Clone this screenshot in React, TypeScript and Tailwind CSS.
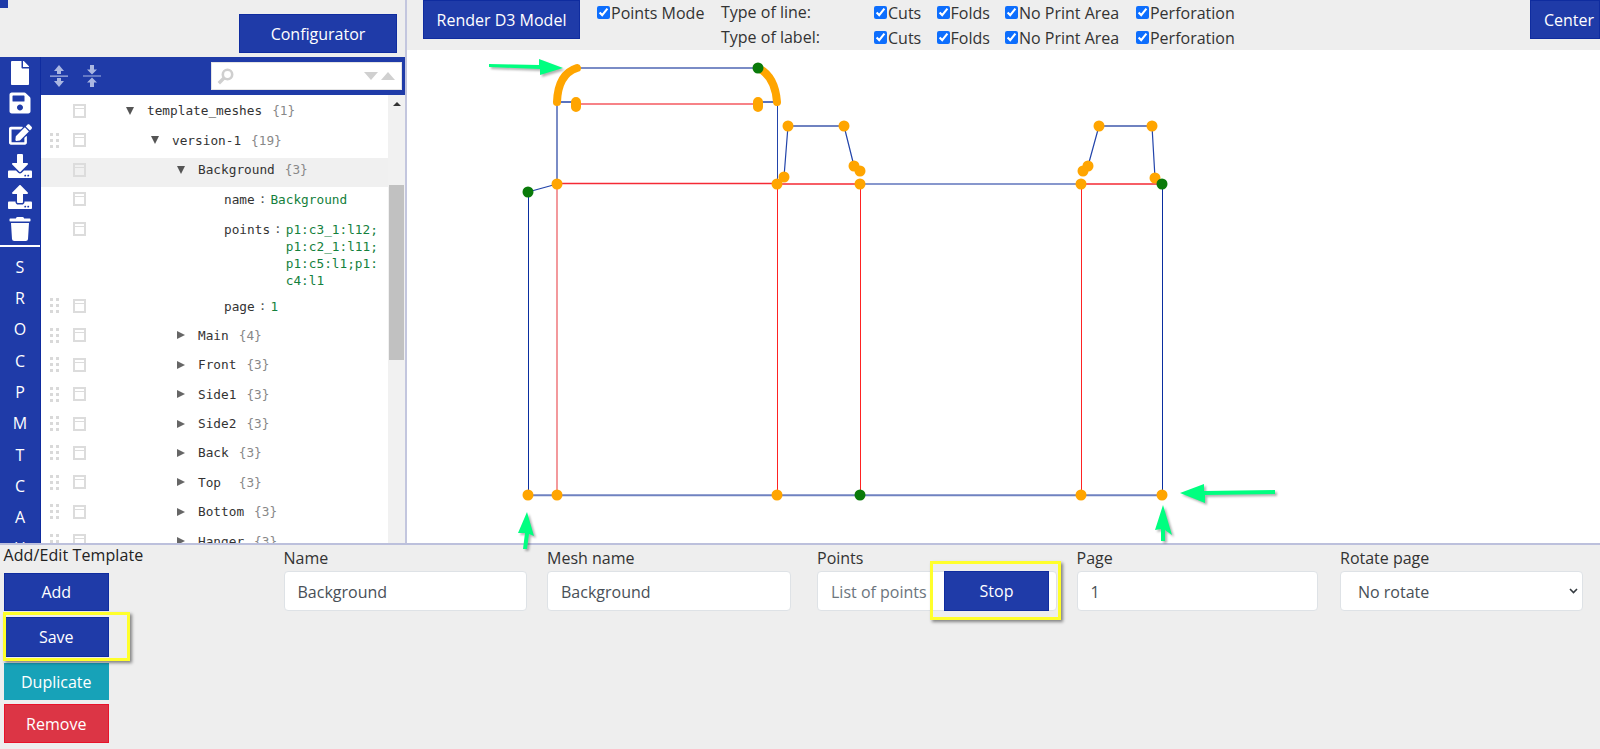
import React from "react"
import { FaDownload, FaEdit, FaFile, FaSave, FaTrash, FaUpload } from "react-icons/fa"

const BLUE_BTN =
  "bg-[#1f3ba8] border border-[#0f2c9f] text-white text-[16px] flex items-center justify-center"

type Row = {
  level: number
  name: string
  count?: string
  value?: string
  open?: boolean
  grip?: boolean
  active?: boolean
}

const rowsTop: Row[] = [
  { level: 0, name: "template_meshes", count: "{1}", open: true },
  { level: 1, name: "version-1", count: "{19}", open: true, grip: true },
  { level: 2, name: "Background", count: "{3}", open: true, active: true },
]

const rowsBottom: Row[] = [
  { level: 2, name: "Main", count: "{4}", grip: true },
  { level: 2, name: "Front", count: "{3}", grip: true },
  { level: 2, name: "Side1", count: "{3}", grip: true },
  { level: 2, name: "Side2", count: "{3}", grip: true },
  { level: 2, name: "Back", count: "{3}", grip: true },
  { level: 2, name: "Top ", count: "{3}", grip: true },
  { level: 2, name: "Bottom", count: "{3}", grip: true },
  { level: 2, name: "Hanger", count: "{3}", grip: true },
]

function Grip() {
  return (
    <div className="grid w-[9px] grid-cols-2 gap-x-[3px] gap-y-[3px]">
      {[0, 1, 2, 3, 4, 5].map((i) => (
        <span key={i} className="h-[3px] w-[3px] bg-[#d9d9d9]" />
      ))}
    </div>
  )
}

function Gutter({ grip }: { grip?: boolean }) {
  return (
    <div className="flex h-[24px] w-[51px] shrink-0 items-center">
      <div className="ml-[9px] w-[23px]">{grip && <Grip />}</div>
      <div className="h-[14px] w-[13px] border-2 border-[#dcdcdc] pt-[2px]">
        <div className="h-[1px] w-full bg-[#dcdcdc]" />
      </div>
    </div>
  )
}

function TreeRow({ row }: { row: Row }) {
  const indent = ["ml-[34px]", "ml-[59px]", "ml-[85px]"][row.level]
  return (
    <div className={`flex h-[29.45px] items-start ${row.active ? "bg-[#f0f0f0]" : ""}`}>
      <Gutter grip={row.grip} />
      <div className={`flex h-[24px] items-center ${indent}`}>
        {row.open ? (
          <span className="h-0 w-0 border-x-[4.5px] border-t-[8px] border-x-transparent border-t-[#555]" />
        ) : (
          <span className="h-0 w-0 border-y-[4.5px] border-l-[8px] border-y-transparent border-l-[#666]" />
        )}
        <span className="ml-[13px] whitespace-pre text-[#333]">{row.name}</span>
        <span className="ml-[10px] text-[#888]">{row.count}</span>
      </div>
    </div>
  )
}

function PropRow({ name, value, multi }: { name: string; value: string[]; multi?: boolean }) {
  return (
    <div className={`flex items-start ${multi ? "h-[77px]" : "h-[29.45px]"}`}>
      <Gutter grip={name === "page"} />
      <div className="ml-[132px] flex items-start pt-[4px] leading-[17px]">
        <span className="text-[#333]">{name}</span>
        <span className="mx-[4px] -mt-[1px] text-[#555]">:</span>
        <div className="text-[#14803c]">
          {value.map((v) => (
            <div key={v}>{v}</div>
          ))}
        </div>
      </div>
    </div>
  )
}

function Tree() {
  return (
    <div className="h-full flex-1 overflow-hidden bg-white pt-[4px] font-['DejaVu_Sans_Mono',monospace] text-[12.75px]">
      {rowsTop.map((r) => (
        <TreeRow key={r.name} row={r} />
      ))}
      <PropRow name="name" value={["Background"]} />
      <PropRow name="points" multi value={["p1:c3_1:l12;", "p1:c2_1:l11;", "p1:c5:l1;p1:", "c4:l1"]} />
      <PropRow name="page" value={["1"]} />
      {rowsBottom.map((r) => (
        <TreeRow key={r.name} row={r} />
      ))}
    </div>
  )
}

function Sidebar() {
  const icons = [
    <FaFile key="file" size={24} />,
    <FaSave key="save" size={24} />,
    <FaEdit key="edit" size={23} />,
    <FaDownload key="dl" size={24} />,
    <FaUpload key="ul" size={24} />,
    <FaTrash key="trash" size={24} />,
  ]
  return (
    <div className="h-full w-[41px] shrink-0 overflow-hidden border-r border-[#0f2c9f] bg-[#1f3ba8] text-white">
      {icons.map((icon, i) => (
        <div key={i} className={`flex h-[31.2px] items-center justify-center ${i === 1 ? "-mt-[1px] mb-[1px]" : ""}`}>
          {icon}
        </div>
      ))}
      <div className="mt-[1px] h-[2px] w-full bg-white" />
      <div className="pt-[4px]">
        {["S", "R", "O", "C", "P", "M", "T", "C", "A", "H"].map((l, i) => (
          <div key={i} className="flex h-[31.3px] items-center justify-center text-[16px]">
            {l}
          </div>
        ))}
      </div>
    </div>
  )
}

function TreeHeader() {
  return (
    <div className="flex h-[38px] shrink-0 items-center bg-[#1f3ba8]">
      <svg width="18" height="22" viewBox="0 0 18 22" className="ml-[9px]">
        <path d="M9 0l5 6h-3v3H7V6H4zM9 22l5-6h-3v-3H7v3H4zM0 10.5h18v1.2H0z" fill="#aab7e2" />
      </svg>
      <svg width="18" height="22" viewBox="0 0 18 22" className="ml-[15px]">
        <path d="M9 9.5l5-5h-3V0H7v4.5H4zM9 12.5l5 5h-3V22H7v-4.5H4zM0 10.4h18v1.2H0z" fill="#aab7e2" />
      </svg>
      <div className="ml-[110px] flex h-[28px] w-[191px] items-center border border-[#e4e4e4] bg-white pl-[5px] pr-[6px]">
        <svg width="17" height="17" viewBox="0 0 17 17">
          <circle cx="10.5" cy="6.5" r="4.7" fill="none" stroke="#cfcfcf" strokeWidth="2.6" />
          <path d="M7 10L1.8 15.2" stroke="#cfcfcf" strokeWidth="3.4" />
        </svg>
        <span className="ml-auto h-0 w-0 border-x-[7px] border-t-[8px] border-x-transparent border-t-[#d0d0d0]" />
        <span className="ml-[3px] h-0 w-0 border-x-[7px] border-b-[8px] border-x-transparent border-b-[#d0d0d0]" />
      </div>
    </div>
  )
}

function Scrollbar() {
  return (
    <div className="h-full w-[17px] shrink-0 bg-[#f1f1f1]">
      <div className="flex h-[17px] items-center justify-center">
        <span className="h-0 w-0 border-x-[4px] border-b-[4px] border-x-transparent border-b-[#333]" />
      </div>
      <div className="mx-auto mt-[73px] h-[175px] w-[15px] bg-[#c1c1c1]" />
    </div>
  )
}

function Check({ label }: { label: string }) {
  return (
    <label className="flex h-[25px] items-center whitespace-nowrap">
      <input type="checkbox" defaultChecked className="m-0 mr-[1px] h-[13px] w-[13px] accent-[#0d6efd]" />
      {label}
    </label>
  )
}

function CheckGroup({ title }: { title: string }) {
  return (
    <div className="grid grid-cols-[153px_62.6px_68.4px_131px_auto] items-center">
      <span className="h-[25px] leading-[25px]">{title}</span>
      <Check label="Cuts" />
      <Check label="Folds" />
      <Check label="No Print Area" />
      <Check label="Perforation" />
    </div>
  )
}

function Toolbar() {
  return (
    <div className="flex h-[50px] shrink-0 items-start bg-[#eeeeee] text-[#333]">
      <button className={`${BLUE_BTN} ml-[16px] h-[39px] w-[157px]`}>Render D3 Model</button>
      <div className="ml-[17px] w-[124px]">
        <Check label="Points Mode" />
      </div>
      <div>
        <CheckGroup title="Type of line:" />
        <CheckGroup title="Type of label:" />
      </div>
      <button className={`${BLUE_BTN} ml-auto h-[39px] w-[70px] pl-[8px]`}>Center</button>
    </div>
  )
}

const ORANGE = "#ffa500"
const GREEN = "#0a7a0a"

const orangeDots = [
  [557, 184], [777, 184], [784, 177], [788, 126], [844, 126], [854, 166], [860, 171], [860, 184],
  [1081, 184], [1099, 126], [1152, 126], [1088, 166], [1083, 171], [1155, 178],
  [528, 495], [557, 495], [777, 495], [1081, 495], [1162, 495],
]
const greenDots = [
  [758, 68], [528, 192], [1162, 184], [860, 495],
]

function Diagram() {
  return (
    <svg viewBox="407 50 1193 493" className="block h-[493px] w-[1193px]">
      <g fill="none">
        <path d="M577 68H758" stroke="#7a8cc6" strokeWidth="2" />
        <path d="M557 102H576M758 102H777" stroke="#2244aa" strokeWidth="1.5" />
        <path d="M576 104H758" stroke="#f4595f" strokeWidth="1.5" />
        <path d="M557 102V184" stroke="#7a8cc6" strokeWidth="2" />
        <path d="M777.5 102V184" stroke="#2244aa" strokeWidth="1" />
        <path d="M788 126H844M1099 126H1152" stroke="#6f82c0" strokeWidth="2" />
        <path d="M788 126L784 177M844 126L854 166M1099 126L1088 166M1152 126L1155 178" stroke="#2244aa" strokeWidth="1.2" />
        <path d="M557 183.5H778M778 184H860M1081 184H1162" stroke="#f52a35" strokeWidth="1.3" />
        <path d="M860 184H1081" stroke="#5f74bc" strokeWidth="1.6" />
        <path d="M528 192L557 184" stroke="#2244aa" strokeWidth="1.2" />
        <path d="M528.5 192V495M1162.5 184V495" stroke="#0a2ea0" strokeWidth="1" />
        <path d="M557 184V495" stroke="#f08084" strokeWidth="1.6" />
        <path d="M777.5 184V495M860.5 184V495M1081.5 184V495" stroke="#f22" strokeWidth="1" />
        <path d="M528 495.3H1162" stroke="#6f82c0" strokeWidth="2" />
        <path d="M577 68Q558 74 557 102M758 68Q775 76 777 102" stroke={ORANGE} strokeWidth="8" strokeLinecap="round" />
        <path d="M576 102V107M758 102V107" stroke={ORANGE} strokeWidth="10" strokeLinecap="round" />
      </g>
      {orangeDots.map(([x, y], i) => (
        <circle key={i} cx={x} cy={y} r="5.5" fill={ORANGE} />
      ))}
      {greenDots.map(([x, y], i) => (
        <circle key={i} cx={x} cy={y} r="5.5" fill={GREEN} />
      ))}
    </svg>
  )
}

function Arrows() {
  return (
    <svg
      viewBox="0 0 1600 749"
      className="pointer-events-none absolute left-0 top-0 h-[749px] w-[1600px] drop-shadow-[2px_2px_1px_rgba(0,0,0,0.3)]"
    >
      <g fill="#00ff80">
        <path d="M489 64L539 65V59L563 68L540 75V69L489 67Z" />
        <path d="M1275 490L1204 491V484L1180 493L1205 503V495L1275 494Z" />
        <path d="M1163 505L1155 530L1161 529V541H1165V530L1172 535Z" />
        <path d="M527 512L518 533L525 533L523 549L527 549L529 534L534 536Z" />
      </g>
    </svg>
  )
}

function Field({ label, className, children }: { label: string; className: string; children: React.ReactNode }) {
  return (
    <div className={className}>
      <div className="h-[26px] text-[16px] leading-[26px] text-[#333]">{label}</div>
      {children}
    </div>
  )
}

const INPUT =
  "block h-[40px] w-full rounded-[4px] border border-[#dee2e6] bg-white pl-[13px] pt-[2px] text-[16px] text-[#495057] outline-none placeholder:text-[#6c757d]"

function BottomPanel() {
  return (
    <div className="relative flex flex-1 border-t-2 border-[#bcc0dc] bg-[#eeeeee] text-[16px]">
      <div className="w-[283.5px] shrink-0 pl-[3.5px]">
        <div className="h-[28px] whitespace-nowrap leading-[20px] font-medium tracking-[0.1px] text-[#222]">Add/Edit Template</div>
        <button className={`${BLUE_BTN} h-[38px] w-[105.5px]`}>Add</button>
        <button className={`${BLUE_BTN} mt-[6px] h-[40px] w-[105.5px]`}>Save</button>
        <button className="mt-[6px] flex h-[37px] w-[105.5px] items-center justify-center bg-[#17a2b8] text-white">
          Duplicate
        </button>
        <button className="mt-[4px] flex h-[39px] w-[105.5px] items-center justify-center border border-[#e8132a] bg-[#dc3545] text-white">
          Remove
        </button>
        <div className="absolute left-[3px] top-[67px] h-[49px] w-[127px] border-[3px] border-[#ffff2a] shadow-[2px_2px_3px_rgba(0,0,0,0.45)]" />
      </div>
      <div className="flex">
        <Field label="Name" className="w-[243.5px]">
          <input className={INPUT} defaultValue="Background" />
        </Field>
        <Field label="Mesh name" className="ml-[20px] w-[244px]">
          <input className={INPUT} defaultValue="Background" />
        </Field>
        <Field label="Points" className="relative ml-[26px] w-[240px]">
          <input className={INPUT} placeholder="List of points" />
          <button className={`${BLUE_BTN} absolute left-[127px] top-[26px] h-[40px] w-[105px]`}>Stop</button>
          <div className="absolute left-[113px] top-[16px] h-[59px] w-[131px] border-[3px] border-[#ffff2a] shadow-[2px_2px_3px_rgba(0,0,0,0.45)]" />
        </Field>
        <Field label="Page" className="ml-[19.5px] w-[241.5px]">
          <input className={INPUT} defaultValue="1" />
        </Field>
        <Field label="Rotate page" className="relative ml-[22px] w-[243px]">
          <select className={`${INPUT} appearance-none pl-[17px]`} defaultValue="none">
            <option value="none">No rotate</option>
          </select>
          <svg width="9" height="6" viewBox="0 0 9 6" className="absolute left-[229px] top-[43px]">
            <path d="M1 1l3.5 3.5L8 1" fill="none" stroke="#343a40" strokeWidth="1.6" />
          </svg>
        </Field>
      </div>
    </div>
  )
}

export default function App(): React.JSX.Element {
  return (
    <div className="relative flex h-[749px] w-[1600px] flex-col overflow-hidden bg-[#eeeeee] font-['Open_Sans',sans-serif] text-[16px]">
      <div className="flex h-[543px] shrink-0">
        <div className="flex w-[407px] shrink-0 flex-col border-r-2 border-[#c3c6de]">
          <div className="relative flex h-[57px] shrink-0 justify-end pr-[8px] pt-[14px]">
            <span className="absolute left-0 top-0 h-[8px] w-[8px] bg-[#1f3ba8]" />
            <button className={`${BLUE_BTN} h-[39px] w-[158px]`}>Configurator</button>
          </div>
          <div className="flex min-h-0 flex-1">
            <Sidebar />
            <div className="flex min-w-0 flex-1 flex-col">
              <TreeHeader />
              <div className="flex min-h-0 flex-1">
                <Tree />
                <Scrollbar />
              </div>
            </div>
          </div>
        </div>
        <div className="flex flex-1 flex-col bg-white">
          <Toolbar />
          <Diagram />
        </div>
      </div>
      <BottomPanel />
      <Arrows />
    </div>
  )
}
